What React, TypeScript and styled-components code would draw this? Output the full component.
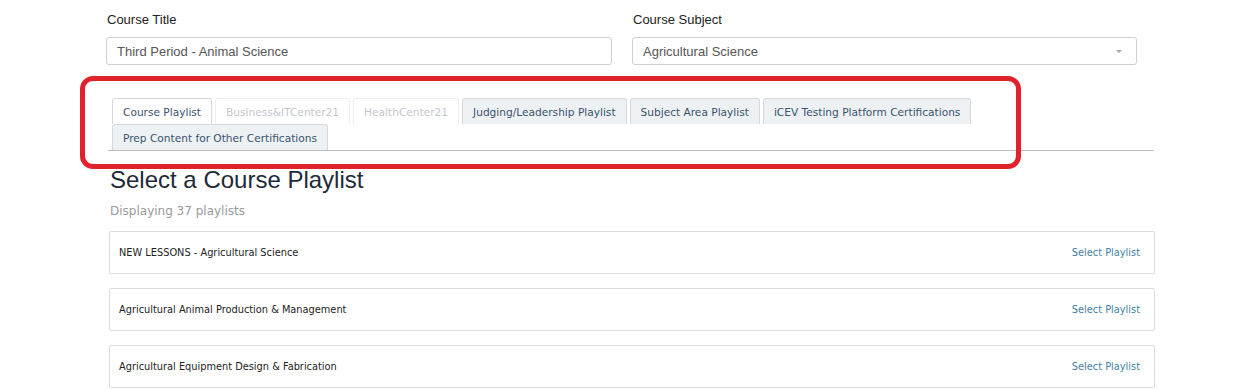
import React from 'react';
import styled, { createGlobalStyle } from 'styled-components';

const GlobalStyle = createGlobalStyle`
  body {
    margin: 0;
    background: #fff;
    font-family: "Liberation Sans", Arial, sans-serif;
  }
`;

const ScPage = styled.div`
  width: 1048px;
  padding: 12px 0 0 106px;
`;

const ScForm = styled.div`
  display: grid;
  grid-template-columns: 506px 505px;
  gap: 20px;
`;

const ScField = styled.div`
  display: flex;
  flex-direction: column;
`;

const ScLabel = styled.label`
  font-size: 13px;
  line-height: 16px;
  color: #222;
  margin: 0 0 9px 1px;
`;

const ScInput = styled.div`
  position: relative;
  height: 28px;
  box-sizing: border-box;
  border: 1px solid #cfcfcf;
  border-radius: 3px;
  padding: 0 10px;
  font-size: 13px;
  line-height: 27px;
  color: #555;
`;

const ScCaret = styled.span`
  position: absolute;
  right: 14px;
  top: 12px;
  width: 0;
  height: 0;
  border-left: 3px solid transparent;
  border-right: 3px solid transparent;
  border-top: 3px solid #aaa;
`;

const ScTabsWrap = styled.div`
  position: relative;
  margin: 33px 0 0 2px;
`;

const ScTabs = styled.div`
  display: flex;
  flex-wrap: wrap;
  padding-left: 4px;
  border-bottom: 1px solid #bdbdbd;
`;

const ScTab = styled.div<{ $kind: 'active' | 'off' | 'normal' }>`
  height: 26px;
  box-sizing: border-box;
  padding: 0 10px;
  margin-right: 3px;
  border: 1px solid ${p => (p.$kind === 'off' ? '#eee' : '#d6d9dc')};
  border-bottom: none;
  border-radius: 3px 3px 0 0;
  background: ${p => (p.$kind === 'normal' ? '#eef1f4' : '#fff')};
  font-family: "DejaVu Sans", Verdana, sans-serif;
  font-size: 10.6px;
  line-height: 26px;
  color: ${p => (p.$kind === 'off' ? '#c3c7cc' : '#38536f')};
  white-space: nowrap;
`;

const ScHighlight = styled.div`
  position: absolute;
  left: -28px;
  top: -22px;
  width: 941px;
  height: 93px;
  box-sizing: border-box;
  border: 5px solid #e1222c;
  border-radius: 13px;
  pointer-events: none;
`;

const ScHeading = styled.h1`
  margin: 15px 0 0 4px;
  font-size: 24px;
  line-height: 28px;
  font-weight: normal;
  color: #1d2a39;
`;

const ScCount = styled.div`
  margin: 10px 0 0 4px;
  font-family: "DejaVu Sans", Verdana, sans-serif;
  font-size: 12px;
  line-height: 15px;
  color: #9a9a9a;
`;

const ScList = styled.div`
  display: flex;
  flex-direction: column;
  gap: 14px;
  margin: 12px 0 0 3px;
  width: 1046px;
`;

const ScRow = styled.div`
  height: 43px;
  box-sizing: border-box;
  border: 1px solid #dcdcdc;
  border-radius: 2px;
  display: flex;
  align-items: center;
  justify-content: space-between;
  padding: 0 14px 0 9px;
  font-family: "DejaVu Sans", Verdana, sans-serif;
  font-size: 9.8px;
  color: #222;
`;

const ScSelect = styled.a`
  color: #3f7fa6;
  cursor: pointer;
`;

const tabs: { label: string; kind: 'active' | 'off' | 'normal' }[] = [
  { label: 'Course Playlist', kind: 'active' },
  { label: 'Business&ITCenter21', kind: 'off' },
  { label: 'HealthCenter21', kind: 'off' },
  { label: 'Judging/Leadership Playlist', kind: 'normal' },
  { label: 'Subject Area Playlist', kind: 'normal' },
  { label: 'iCEV Testing Platform Certifications', kind: 'normal' },
  { label: 'Prep Content for Other Certifications', kind: 'normal' }
];

const playlists = [
  'NEW LESSONS - Agricultural Science',
  'Agricultural Animal Production & Management',
  'Agricultural Equipment Design & Fabrication'
];

export default function App(): JSX.Element {
  return <>
    <GlobalStyle />
    <ScPage>
      <ScForm>
        <ScField>
          <ScLabel>Course Title</ScLabel>
          <ScInput>Third Period - Animal Science</ScInput>
        </ScField>
        <ScField>
          <ScLabel>Course Subject</ScLabel>
          <ScInput>
            Agricultural Science
            <ScCaret />
          </ScInput>
        </ScField>
      </ScForm>
      <ScTabsWrap>
        <ScTabs>
          {tabs.map(t => <ScTab key={t.label} $kind={t.kind}>{t.label}</ScTab>)}
        </ScTabs>
        <ScHighlight />
      </ScTabsWrap>
      <ScHeading>Select a Course Playlist</ScHeading>
      <ScCount>Displaying 37 playlists</ScCount>
      <ScList>
        {playlists.map(p => (
          <ScRow key={p}>
            <span>{p}</span>
            <ScSelect>Select Playlist</ScSelect>
          </ScRow>
        ))}
      </ScList>
    </ScPage>
  </>;
}
